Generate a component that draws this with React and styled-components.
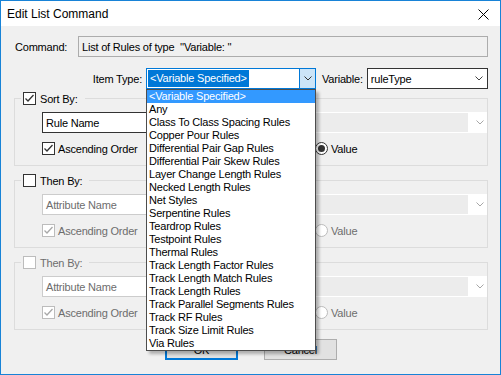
import styled, { createGlobalStyle } from "styled-components";

const GlobalStyle = createGlobalStyle`
  html, body {
    margin: 0;
    padding: 0;
    background: #fff;
  }
  body {
    font-family: "Liberation Sans", Arial, sans-serif;
    font-size: 11px;
    letter-spacing: -0.2px;
    color: #000;
  }
  * {
    box-sizing: border-box;
  }
`;

const ITEM_TYPES = [
  "<Variable Specified>",
  "Any",
  "Class To Class Spacing Rules",
  "Copper Pour Rules",
  "Differential Pair Gap Rules",
  "Differential Pair Skew Rules",
  "Layer Change Length Rules",
  "Necked Length Rules",
  "Net Styles",
  "Serpentine Rules",
  "Teardrop Rules",
  "Testpoint Rules",
  "Thermal Rules",
  "Track Length Factor Rules",
  "Track Length Match Rules",
  "Track Length Rules",
  "Track Parallel Segments Rules",
  "Track RF Rules",
  "Track Size Limit Rules",
  "Via Rules",
];

const GROUPS = [
  { title: "Sort By:", field: "Rule Name", checked: true, enabled: true, ascending: true, value: true },
  { title: "Then By:", field: "Attribute Name", checked: false, enabled: true, ascending: true, value: false, fieldDisabled: true },
  { title: "Then By:", field: "Attribute Name", checked: false, enabled: false, ascending: true, value: false, fieldDisabled: true },
];

const Chevron = ({ color = "#444" }) => (
  <svg width="8" height="5" viewBox="0 0 8 5">
    <polyline points="0.5,0.5 4,4 7.5,0.5" fill="none" stroke={color} strokeWidth="1" />
  </svg>
);

const CheckBox = ({ checked, disabled }) => (
  <Box $disabled={disabled}>
    {checked && (
      <svg width="11" height="11" viewBox="0 0 11 11">
        <polyline
          points="1.5,5.5 4,8 9.5,2"
          fill="none"
          stroke={disabled ? "#a8a8a8" : "#333"}
          strokeWidth="1.3"
        />
      </svg>
    )}
  </Box>
);

const App = () => {
  return (
    <>
      <GlobalStyle />
      <Window>
        <TitleBar>
          <span>Edit List Command</span>
          <CloseIcon width="11" height="11" viewBox="0 0 11 11">
            <path d="M0.5 0.5 L10.5 10.5 M10.5 0.5 L0.5 10.5" stroke="#000" strokeWidth="1" />
          </CloseIcon>
        </TitleBar>

        <Body>
          <Row>
            <CommandLabel>Command:</CommandLabel>
            <ReadOnlyBox>List of Rules of type&nbsp; ''Variable: ''</ReadOnlyBox>
          </Row>

          <ItemRow>
            <ItemLabel>Item Type:</ItemLabel>
            <ItemCombo>
              <Selection>&lt;Variable Specified&gt;</Selection>
              <DropButton>
                <Chevron color="#333" />
              </DropButton>
              <DropList>
                {ITEM_TYPES.map((t, i) => (
                  <ListItem key={t} $selected={i === 0}>{t}</ListItem>
                ))}
              </DropList>
            </ItemCombo>
            <VariableLabel>Variable:</VariableLabel>
            <VariableCombo>
              <span>ruleType</span>
              <Chevron color="#444" />
            </VariableCombo>
          </ItemRow>

          {GROUPS.map((g, i) => (
            <Group key={i}>
              <Legend $disabled={!g.enabled}>
                <CheckBox checked={g.checked} disabled={!g.enabled} />
                <span>{g.title}</span>
              </Legend>
              <GroupContent>
                <FieldCombo>
                  <FieldLeft $disabled={g.fieldDisabled}>{g.field}</FieldLeft>
                  <FieldRight>
                    <ChevronCell>
                      <Chevron color="#a6a6a6" />
                    </ChevronCell>
                  </FieldRight>
                </FieldCombo>
                <OptionsRow>
                  <AscOption $disabled={g.fieldDisabled}>
                    <CheckBox checked={g.ascending} disabled={g.fieldDisabled} />
                    <span>Ascending Order</span>
                  </AscOption>
                  <Option $disabled={g.fieldDisabled}>
                    <Radio $checked={g.value} $disabled={g.fieldDisabled} />
                    <span>Value</span>
                  </Option>
                </OptionsRow>
              </GroupContent>
            </Group>
          ))}

          <ButtonRow>
            <Button $default>OK</Button>
            <Button>Cancel</Button>
          </ButtonRow>
        </Body>
      </Window>
    </>
  );
};

export default App;

const Window = styled.div`
  width: 501px;
  height: 375px;
  border: 1px solid #1883d7;
  background: #f0f0f0;
  display: flex;
  flex-direction: column;
  overflow: hidden;
`;

const TitleBar = styled.div`
  height: 25px;
  flex: none;
  background: #fff;
  display: flex;
  align-items: center;
  justify-content: space-between;
  padding: 0 11px 0 6px;
  font-size: 12px;
  letter-spacing: 0;
`;

const CloseIcon = styled.svg`
  margin-top: 1px;
`;

const Body = styled.div`
  flex: 1;
  padding: 10px 12px 0 13px;
  display: flex;
  flex-direction: column;
`;

const Row = styled.div`
  height: 21px;
  display: flex;
  align-items: center;
`;

const CommandLabel = styled.div`
  width: 64px;
  padding-left: 1px;
`;

const ReadOnlyBox = styled.div`
  flex: 1;
  height: 21px;
  border: 1px solid #acacac;
  background: #f0f0f0;
  display: flex;
  align-items: center;
  padding-left: 3px;
  white-space: pre;
`;

const ItemRow = styled(Row)`
  margin-top: 11px;
  position: relative;
  z-index: 2;
`;

const ItemLabel = styled.div`
  width: 128px;
  text-align: right;
  margin-right: 4px;
`;

const ItemCombo = styled.div`
  position: relative;
  width: 170px;
  height: 21px;
  border: 1px solid #0078d7;
  background: #fff;
  display: flex;
  align-items: center;
  padding-left: 1px;
`;

const Selection = styled.span`
  background: #0078d7;
  color: #fff;
  height: 17px;
  line-height: 17px;
  padding: 0 2px 0 2px;
`;

const DropButton = styled.div`
  margin-left: auto;
  width: 16px;
  height: 19px;
  background: #cce4f7;
  border-left: 1px solid #0078d7;
  display: flex;
  align-items: center;
  justify-content: center;
`;

const DropList = styled.div`
  position: absolute;
  top: 20px;
  left: -1px;
  width: 170px;
  border: 1px solid #4d4d4d;
  background: #fff;
  box-shadow: 3px 3px 3px rgba(0, 0, 0, 0.28);
  display: flex;
  flex-direction: column;
`;

const ListItem = styled.div`
  height: 13px;
  line-height: 13px;
  padding-left: 2px;
  white-space: nowrap;
  background: ${(p) => (p.$selected ? "#3399ff" : "#fff")};
  color: ${(p) => (p.$selected ? "#fff" : "#000")};
`;

const VariableLabel = styled.div`
  margin-left: 6px;
  margin-right: 4px;
`;

const VariableCombo = styled.div`
  flex: 1;
  height: 21px;
  border: 1px solid #333;
  background: #fff;
  display: flex;
  align-items: center;
  justify-content: space-between;
  padding: 0 4px 0 3px;
`;

const Group = styled.fieldset`
  margin: 3px 0 0 0;
  width: 474px;
  border: 1px solid #dcdcdc;
  padding: 7px 0 10px 0;
  & + & {
    margin-top: 8px;
  }
`;

const Legend = styled.legend`
  margin-left: 6px;
  padding: 0 7px 0 2px;
  height: 13px;
  display: flex;
  align-items: center;
  gap: 4px;
  color: ${(p) => (p.$disabled ? "#6d6d6d" : "#000")};
`;

const GroupContent = styled.div`
  padding-left: 27px;
`;

const Box = styled.span`
  width: 13px;
  height: 13px;
  flex: none;
  border: 1px solid ${(p) => (p.$disabled ? "#bcbcbc" : "#333")};
  background: #fff;
  display: inline-flex;
  align-items: center;
  justify-content: center;
`;

const FieldCombo = styled.div`
  height: 21px;
  display: flex;
`;

const FieldLeft = styled.div`
  flex: 1;
  background: #fff;
  border: 1px solid ${(p) => (p.$disabled ? "#cccccc" : "#333")};
  border-right: none;
  padding-left: 3px;
  display: flex;
  align-items: center;
  color: ${(p) => (p.$disabled ? "#6d6d6d" : "#000")};
`;

const FieldRight = styled.div`
  width: 200px;
  display: flex;
  justify-content: flex-end;
  background: #ececec;
  border: 1px solid #fff;
  border-left: none;
`;

const ChevronCell = styled.div`
  width: 18px;
  background: #fff;
  display: flex;
  align-items: center;
  padding-left: 8px;
`;

const OptionsRow = styled.div`
  margin-top: 9px;
  height: 13px;
  display: flex;
  align-items: center;
`;

const Option = styled.label`
  display: flex;
  align-items: center;
  gap: 3px;
  color: ${(p) => (p.$disabled ? "#6d6d6d" : "#000")};
`;

const AscOption = styled(Option)`
  width: 273px;
`;

const Radio = styled.span`
  width: 13px;
  height: 13px;
  border-radius: 50%;
  border: 1px solid ${(p) => (p.$disabled ? "#bcbcbc" : "#333")};
  background: #fff;
  display: inline-flex;
  align-items: center;
  justify-content: center;
  &::after {
    content: "";
    width: 7px;
    height: 7px;
    border-radius: 50%;
    background: #333;
    display: ${(p) => (p.$checked ? "block" : "none")};
  }
`;

const ButtonRow = styled.div`
  margin-top: 9px;
  display: flex;
  justify-content: center;
  gap: 26px;
`;

const Button = styled.button`
  width: 73px;
  height: 21px;
  font: inherit;
  letter-spacing: inherit;
  background: #e1e1e1;
  border: 1px solid ${(p) => (p.$default ? "#0078d7" : "#adadad")};
  box-shadow: ${(p) => (p.$default ? "inset 0 0 0 1px #0078d7" : "none")};
  padding: 0;
  color: #000;
`;
